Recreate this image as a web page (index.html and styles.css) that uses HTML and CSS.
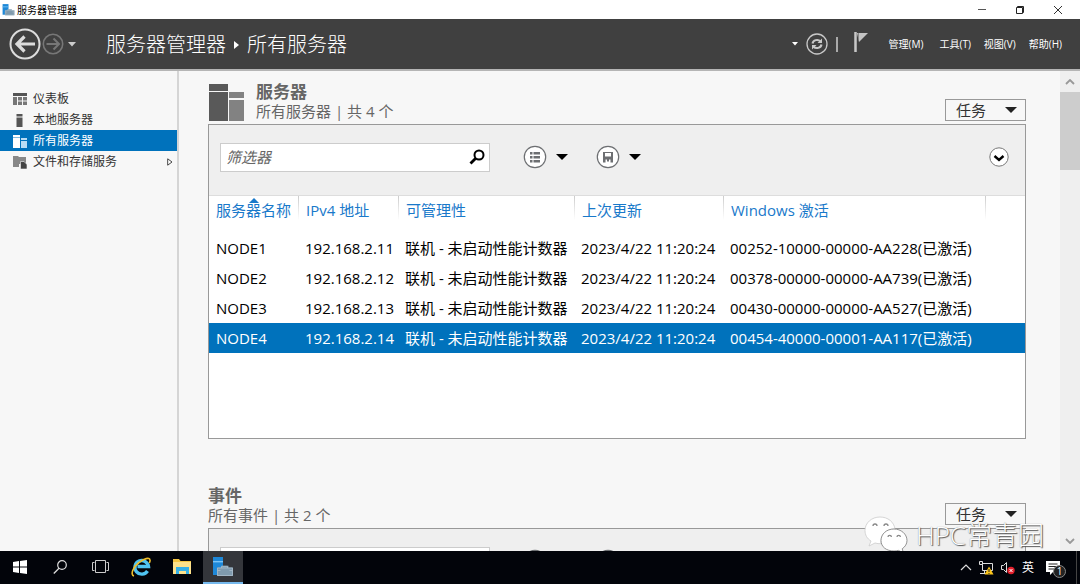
FILE: index.html
```html
<!DOCTYPE html>
<html lang="zh-CN">
<head>
<meta charset="utf-8">
<title>服务器管理器</title>
<link rel="stylesheet" href="styles.css">
</head>
<body>
<svg class="defs" width="0" height="0" aria-hidden="true">
  <symbol id="app-icon" viewBox="0 0 22 20">
    <path d="M1 0h10v18H1z" fill="#1e88d8"/>
    <path d="M1 4h10v1.4H1z" fill="#7cc4f5"/>
    <path d="M5 10.500h4.500V8.800h7v1.700H21V19H5z" fill="#7f9aad"/>
    <path d="M5.500 11h15v7.500h-15zM9.500 11V9.300h6V11M5.500 13.500h3m9 0h3" fill="none" stroke="#a9bdca" stroke-width=".8"/>
  </symbol>
  <symbol id="list-icon" viewBox="0 0 24 24">
    <circle cx="12" cy="12" r="10.700" fill="#fff" stroke="#6d6f72" stroke-width="1.200"/>
    <path d="M7 7h2.500v2.500H7zm0 4h2.500v2.500H7zm0 4h2.500v2.500H7zM10.500 7H17v2.500h-6.500zm0 4H17v2.500h-6.500zm0 4H17v2.500h-6.500z" fill="#6d6f72"/>
  </symbol>
  <symbol id="save-icon" viewBox="0 0 24 24">
    <circle cx="12" cy="12" r="10.700" fill="#fff" stroke="#6d6f72" stroke-width="1.200"/>
    <path d="M7 7h10v10.500h-2.500v-3h-1.500v2h-2v-2h-1.500v3H7z" fill="#6d6f72"/>
    <path d="M9 8h6v3.500H9z" fill="#fff"/>
  </symbol>
</svg>

<header class="titlebar">
  <svg class="titlebar-icon" width="13" height="12"><use href="#app-icon"/></svg>
  <span class="titlebar-text">服务器管理器</span>
  <div class="window-controls">
    <button aria-label="最小化"><svg width="10" height="10"><path d="M1 4.500h8" stroke="#555"/></svg></button>
    <button aria-label="还原"><svg width="10" height="10" fill="none" stroke="#222"><path d="M1.500 2.500h6v6h-6zM2.500 2.500v-1h6v6h-1"/></svg></button>
    <button aria-label="关闭"><svg width="10" height="10"><path d="M1 1l8 8M9 1L1 9" stroke="#333"/></svg></button>
  </div>
</header>

<nav class="banner">
  <div class="history">
    <button aria-label="后退"><svg width="32" height="32" viewBox="0 0 32 32" fill="none"><circle cx="16" cy="16" r="14.500" stroke="#dcdcdc" stroke-width="2"/><path d="M7.500 16H26M15.500 8.500L8 16l7.500 7.500" stroke="#dcdcdc" stroke-width="3.200"/></svg></button>
    <button aria-label="前进"><svg width="22" height="22" viewBox="0 0 22 22" fill="none" stroke="#777"><circle cx="11" cy="11" r="9.700" stroke-width="1.600"/><path d="M4.500 11H17M11.500 5.500L17 11l-5.500 5.500" stroke-width="2"/></svg></button>
    <button aria-label="历史记录"><svg width="10" height="6"><path d="M1 1h8L5 5.500z" fill="#ccc"/></svg></button>
  </div>
  <div class="crumbs">
    <span>服务器管理器</span>
    <svg width="5" height="8"><path d="M0 0l5 4-5 4z" fill="#fff"/></svg>
    <span>所有服务器</span>
  </div>
  <div class="banner-tools">
    <button aria-label="更多"><svg width="6" height="4"><path d="M0 0h6L3 3.500z" fill="#fff"/></svg></button>
    <button aria-label="刷新"><svg width="22" height="22" viewBox="0 0 22 22" fill="none" stroke="#c8c8c8"><circle cx="11" cy="11" r="10" stroke-width="1.300"/><path d="M6.500 10.500a4.500 4 0 0 1 8-2M15.500 11.500a4.500 4 0 0 1-8 2" stroke-width="2"/><path d="M16 5.500v4.500h-4.500zM6 16.500V12h4.500z" fill="#c8c8c8" stroke="none"/></svg></button>
    <span class="divider"></span>
    <button class="flag" aria-label="通知"><svg width="14" height="20"><path d="M1.500 0v20" stroke="#c8c8c8" stroke-width="2.500"/><path d="M3 1h11L5 10z" fill="#c4c4c4"/><path d="M4.500 1v7" stroke="#777" stroke-width=".8"/></svg></button>
  </div>
  <div class="menus">
    <button class="menu-first">管理(M)</button>
    <button>工具(T)</button>
    <button>视图(V)</button>
    <button>帮助(H)</button>
  </div>
</nav>

<div class="workspace">
  <aside class="sidebar">
    <a class="side-item" href="#dashboard">
      <svg width="14" height="14"><path d="M0 1h14v3H0z" fill="#555"/><path d="M0 5h4v8H0zM5 5h4v3.500H5zm5 0h4v3.500h-4zM5 9.500h4V13H5zm5 0h4V13h-4z" fill="#777"/></svg>
      <span>仪表板</span>
    </a>
    <a class="side-item" href="#local">
      <svg width="14" height="14"><path d="M3.500 1h6v2.500h-6zM3.500 4.500h6V14h-6z" fill="#555"/></svg>
      <span>本地服务器</span>
    </a>
    <a class="side-item selected" href="#all" aria-current="page">
      <svg width="14" height="14"><path d="M0 1h7v2.500H0zM0 4h7v10H0z" fill="#fff"/><path d="M8 4h6v2H8zm0 3h6v7H8z" fill="#b9dcf4"/></svg>
      <span>所有服务器</span>
    </a>
    <a class="side-item" href="#storage">
      <svg width="14" height="14"><path d="M0 1h5l1 1h7v3H0zM0 5h6v7H0z" fill="#888"/><path d="M6 4h7v5H6z" fill="#888"/><path d="M7.500 6.500h3.500l3 3V14H7.500z" fill="#444" stroke="#f7f7f7" stroke-width=".6"/></svg>
      <span>文件和存储服务</span>
      <svg class="expand" width="6" height="8"><path d="M.7.8v6.400L5 4z" fill="#fff" stroke="#444"/></svg>
    </a>
  </aside>

  <main class="content">
    <section class="block">
      <div class="block-head">
        <svg class="block-icon" width="36" height="38"><path d="M0 1h19v7H0zM0 9h19v29H0z" fill="#595959"/><path d="M20 9h15v6H20zm0 8h15v21H20z" fill="#828282"/></svg>
        <div class="block-titles">
          <h2>服务器</h2>
          <p>所有服务器 | 共 4 个</p>
        </div>
        <button class="tasks" aria-haspopup="menu">任务<svg width="12" height="7"><path d="M0 0h12L6 6z" fill="#222"/></svg></button>
      </div>
      <div class="panel">
        <div class="toolbar">
          <div class="filter">
            <input type="text" placeholder="筛选器" aria-label="筛选器">
            <button aria-label="搜索"><svg width="16" height="16" fill="none" stroke="#000"><circle cx="10" cy="6" r="4.500" stroke-width="2"/><path d="M6.500 9.500L1.500 14.500" stroke-width="2.800"/></svg></button>
          </div>
          <button class="tool" aria-label="视图选项"><svg width="24" height="24"><use href="#list-icon"/></svg><svg width="12" height="7"><path d="M0 0h12L6 6z"/></svg></button>
          <button class="tool" aria-label="保存查询"><svg width="24" height="24"><use href="#save-icon"/></svg><svg width="12" height="7"><path d="M0 0h12L6 6z"/></svg></button>
          <button class="collapse" aria-label="展开"><svg width="20" height="20" fill="none"><circle cx="10" cy="10" r="9.200" fill="#fff" stroke="#777"/><path d="M5.500 9l4.500 4 4.500-4" stroke="#000" stroke-width="2.400"/></svg></button>
        </div>
        <table class="grid">
          <colgroup><col class="c-name"><col class="c-ip"><col class="c-state"><col class="c-time"><col class="c-key"><col></colgroup>
          <thead>
            <tr><th class="sorted" aria-sort="ascending">服务器名称</th><th>IPv4 地址</th><th>可管理性</th><th>上次更新</th><th>Windows 激活</th><th></th></tr>
          </thead>
          <tbody>
            <tr><td>NODE1</td><td>192.168.2.11</td><td>联机 - 未启动性能计数器</td><td>2023/4/22 11:20:24</td><td>00252-10000-00000-AA228(已激活)</td><td></td></tr>
            <tr><td>NODE2</td><td>192.168.2.12</td><td>联机 - 未启动性能计数器</td><td>2023/4/22 11:20:24</td><td>00378-00000-00000-AA739(已激活)</td><td></td></tr>
            <tr><td>NODE3</td><td>192.168.2.13</td><td>联机 - 未启动性能计数器</td><td>2023/4/22 11:20:24</td><td>00430-00000-00000-AA527(已激活)</td><td></td></tr>
            <tr class="selected"><td>NODE4</td><td>192.168.2.14</td><td>联机 - 未启动性能计数器</td><td>2023/4/22 11:20:24</td><td>00454-40000-00001-AA117(已激活)</td><td></td></tr>
          </tbody>
        </table>
      </div>
    </section>

    <section class="block">
      <div class="block-head">
        <div class="block-titles">
          <h2>事件</h2>
          <p>所有事件 | 共 2 个</p>
        </div>
        <button class="tasks" aria-haspopup="menu">任务<svg width="12" height="7"><path d="M0 0h12L6 6z" fill="#222"/></svg></button>
      </div>
      <div class="panel">
        <div class="toolbar">
          <div class="filter"><input type="text" aria-label="筛选事件"></div>
          <button class="tool" aria-label="事件视图选项"><svg width="24" height="24"><use href="#list-icon"/></svg><svg width="12" height="7"><path d="M0 0h12L6 6z"/></svg></button>
          <button class="tool" aria-label="保存事件查询"><svg width="24" height="24"><use href="#save-icon"/></svg></button>
        </div>
      </div>
    </section>
  </main>

  <div class="scrollbar">
    <button aria-label="向上滚动"><svg width="10" height="6" fill="none"><path d="M1 5l4-4 4 4" stroke="#999" stroke-width="1.800"/></svg></button>
    <div class="thumb"></div>
    <button class="scroll-down" aria-label="向下滚动"><svg width="10" height="6" fill="none"><path d="M1 1l4 4 4-4" stroke="#999" stroke-width="1.800"/></svg></button>
  </div>

  <div class="watermark">
    <svg width="44" height="38" viewBox="0 0 44 38">
      <path d="M16 1C7.500 1 1 7 1 14.500c0 4.500 2 8 6 10.500l-2 5 6-3c2 .6 4 .8 6 .7C16 19 22 13 31 13 30 6 24 1 16 1z" fill="#fff" stroke="#ccc" stroke-width=".8"/>
      <path d="M30 13c-7.500 0-13 5-13 11.500S22.500 35 30 35c1.500 0 3-.2 4.500-.6l5 2.600-1.300-4.200c3-2 4.800-5 4.800-8.300C43 18 37 13 30 13z" fill="#fff" stroke="#888" stroke-width=".9"/>
      <path d="M9 10a2 2 0 0 1 4 0M20 10a2 2 0 0 1 4 0M24 21a1.700 1.700 0 0 1 3.400 0M33 21a1.700 1.700 0 0 1 3.400 0" fill="none" stroke="#888" stroke-width="1.300"/>
    </svg>
    <span>HPC常青园</span>
  </div>
</div>

<footer class="taskbar">
  <div class="task-group">
    <button aria-label="开始"><svg width="14" height="14" fill="#fff"><path d="M0 2l6-1v5.600H0zM7 .9L14 0v6.600H7zM0 7.500h6V13l-6-1zM7 7.500h7V14l-7-.9z"/></svg></button>
    <button aria-label="搜索"><svg width="14" height="14" fill="none" stroke="#ddd"><circle cx="9" cy="5" r="4.300" stroke-width="1.200"/><path d="M6 8.300L.8 13.500" stroke-width="1.300"/></svg></button>
    <button aria-label="任务视图"><svg width="17" height="13" fill="none" stroke="#ccc"><path d="M3.500.5h10v12h-10zM2.500 2.500h-2v8h2M14.500 2.500h2v8h-2"/></svg></button>
  </div>
  <div class="task-group apps">
    <button aria-label="Internet Explorer"><svg width="20" height="20" viewBox="0 0 20 20" fill="none"><path d="M16.500 14a6.800 6.800 0 1 1 1-4.500H6.500" stroke="#4fc3f0" stroke-width="3.400"/><path d="M3 19C-1 18 2 10 8 5.500 13 1.500 18.500 0 19 3c.2 1-.2 2-.8 3" stroke="#efbf2c" stroke-width="1.600"/></svg></button>
    <button aria-label="文件资源管理器"><svg width="20" height="17"><path d="M1 1h6l1.500 2H19v13H1z" fill="#f4c542"/><path d="M1 4h18v12H1z" fill="#fde18a"/><path d="M4 9h13v7h-3v-3H7v3H4z" fill="#36b0e6"/></svg></button>
    <button class="active" aria-label="服务器管理器"><svg width="22" height="20"><use href="#app-icon"/></svg></button>
  </div>
  <div class="tray">
    <svg width="12" height="7" fill="none"><path d="M1 6l5-5 5 5" stroke="#ddd" stroke-width="1.200"/></svg>
    <svg width="15" height="14"><path d="M3.500 2.500h10v7h-10zM1 12.500h7M5.500 9.500v3" fill="none" stroke="#ddd"/><path d="M.5.5h3v3h-3z" fill="#111" stroke="#ddd"/><path d="M10 5.500l4.500 8h-9z" fill="#fcc419"/><path d="M10 8v3m0 1v1" stroke="#222"/></svg>
    <svg width="14" height="14"><path d="M.5 4.500h2l3-3v10l-3-3h-2z" fill="none" stroke="#ddd"/><circle cx="10" cy="9.500" r="3.700" fill="#e2202c"/><path d="M8.500 8l3 3m0-3l-3 3" stroke="#fff"/></svg>
    <span class="ime">英</span>
    <button class="notices" aria-label="操作中心"><svg width="14" height="14"><path d="M0 0h14v11H7l-3 3v-3H0z" fill="#fff"/><path d="M2.500 3h9m-9 2.500h9M2.500 8h6" stroke="#222"/></svg><span class="count">1</span></button>
  </div>
</footer>
</body>
</html>
```

FILE: styles.css
```css
* { box-sizing: border-box; }

body {
  margin: 0;
  height: 100vh;
  display: flex;
  flex-direction: column;
  overflow: hidden;
  background: #f7f7f7;
  color: #000;
  font: 15px/20px "Open Sans", "Noto Sans CJK SC", sans-serif;
}

button {
  display: flex;
  align-items: center;
  justify-content: center;
  padding: 0;
  border: 0;
  background: none;
  color: inherit;
  font: inherit;
}

svg { display: block; flex: none; }
.defs { position: absolute; }

.titlebar {
  display: flex;
  align-items: center;
  height: 19px;
  flex: none;
  padding-left: 2px;
  background: #fff;
  font-size: 10px;
}
.titlebar-text { margin-left: 2px; }
.window-controls { display: flex; margin-left: auto; padding-right: 3px; }
.window-controls button { width: 38px; height: 19px; }

.banner {
  display: flex;
  align-items: center;
  height: 52px;
  flex: none;
  padding: 0 18px 0 9px;
  background: #404040;
  border-bottom: 2px solid #b5b5b5;
  color: #fff;
}
.history { display: flex; align-items: center; gap: 1px; width: 97px; }
.history button:last-child { margin-left: 2px; }
.crumbs {
  display: flex;
  align-items: center;
  gap: 8px;
  padding-top: 2px;
  font-size: 20px;
  font-weight: 300;
}
.banner-tools { display: flex; align-items: center; gap: 8px; margin-left: auto; }
.divider { width: 2px; height: 15px; background: #aaa; }
.flag { margin: 0 0 4px 8px; }
.menus { display: flex; gap: 13px; margin-left: 21px; font-size: 10px; }
.menu-first { margin-right: 3px; }

.workspace { position: relative; display: flex; flex: 1; min-height: 0; }

.sidebar {
  width: 179px;
  flex: none;
  padding-top: 17px;
  border-right: 2px solid #d5d5d5;
  font-size: 12px;
}
.side-item {
  display: flex;
  align-items: center;
  gap: 6px;
  height: 21px;
  padding: 0 4px 0 13px;
  color: #333;
  text-decoration: none;
}
.side-item.selected { background: #0072bc; color: #fff; }
.expand { margin-left: auto; }

.content { flex: 1; min-width: 0; padding: 11px 34px 0 29px; overflow: hidden; }
.block { margin-bottom: 47px; }
.block-head { display: flex; height: 42px; padding-bottom: 3px; color: #666; }
.block-icon { margin: 1px 11px 0 1px; }
.block-titles { flex: 1; }
h2 { margin: 0; font-size: 17px; line-height: 20px; font-weight: 700; }
.block-titles p { margin: 0; line-height: 18px; }
.tasks {
  align-self: flex-end;
  justify-content: space-between;
  width: 81px;
  height: 22px;
  padding: 0 8px 0 10px;
  border: 1px solid #999;
  color: #333;
}

.panel { min-height: 315px; border: 1px solid #999; background: #fff; }
.toolbar {
  display: flex;
  align-items: center;
  height: 71px;
  padding: 0 16px 6px 11px;
  background: #efefef;
  border-bottom: 1px solid #ddd;
}
.filter {
  display: flex;
  width: 270px;
  height: 29px;
  margin-right: 33px;
  padding-right: 4px;
  border: 1px solid #ccc;
  background: #fff;
}
.filter input {
  flex: 1;
  min-width: 0;
  padding: 0 5px;
  border: 0;
  outline: 0;
  background: none;
  font: inherit;
}
.filter input::placeholder { color: #666; font-style: italic; }
.tool { gap: 9px; margin-right: 28px; }
.collapse { margin-left: auto; }

.grid { width: 100%; table-layout: fixed; border-collapse: collapse; }
.c-name { width: 90px; }
.c-ip { width: 100px; }
.c-state { width: 176px; }
.c-time { width: 149px; }
.c-key { width: 262px; }
.grid th {
  height: 37px;
  padding: 4px 0 0 7px;
  vertical-align: top;
  text-align: left;
  font-weight: 400;
  color: #1979ca;
  white-space: nowrap;
  background: linear-gradient(#ccc, #fff) right top / 1px 24px no-repeat;
}
.grid th:last-child { background: none; }
.grid th.sorted { position: relative; }
.sorted::before {
  content: "";
  position: absolute;
  top: 2px;
  left: 40px;
  border: 5px solid transparent;
  border-top: 0;
  border-bottom-color: #1979ca;
}
.grid td { height: 30px; padding: 0 0 0 6px; white-space: nowrap; }
.grid td:first-child { padding-left: 7px; }
.grid tr.selected { background: #0072bc; color: #fff; }

.scrollbar {
  display: flex;
  flex-direction: column;
  width: 20px;
  flex: none;
  background: #efefef;
}
.scrollbar button { height: 21px; width: 20px; }
.thumb { height: 78px; background: #cdcdcd; }
.scrollbar .scroll-down { margin-top: auto; }

.watermark {
  position: absolute;
  right: 36px;
  bottom: -3px;
  display: flex;
  align-items: center;
  gap: 8px;
  color: #fff;
  font-size: 26px;
  line-height: 36px;
  font-weight: 300;
  text-shadow: 1px 1px 1px #555, 0 0 1px #888;
}

.taskbar {
  position: relative;
  display: flex;
  height: 33px;
  flex: none;
  background: #02040a;
  color: #fff;
}
.task-group { display: flex; }
.task-group button { width: 40px; height: 33px; border-bottom: 2px solid transparent; }
.apps { gap: 1px; margin-left: 1px; }
.task-group .active { background: #34363b; border-bottom-color: #76b9ed; }
.tray {
  display: flex;
  align-items: center;
  gap: 7px;
  margin-left: auto;
  margin-right: 3px;
  padding-right: 12px;
  border-right: 1px solid #444;
}
.ime { font-size: 12px; }
.notices { position: relative; margin-left: 5px; padding-right: 4px; }
.count {
  position: absolute;
  left: 7px;
  top: 4px;
  width: 13px;
  height: 13px;
  border: 1px solid #888;
  border-radius: 50%;
  background: #222;
  font-size: 10px;
  line-height: 11px;
  text-align: center;
}
```
